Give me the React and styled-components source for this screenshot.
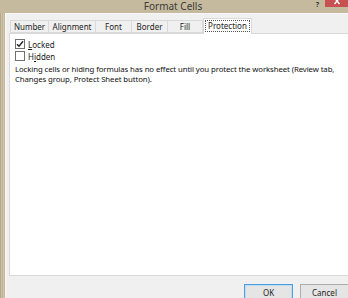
import React, { useState } from 'react';
import styled, { createGlobalStyle } from 'styled-components';

const GlobalStyle = createGlobalStyle`
  html, body {
    margin: 0;
    padding: 0;
    background: #c6ba9e;
  }
  body {
    font-family: "Noto Sans", "Open Sans", sans-serif;
  }
`;

const Window = styled.div`
  width: 348px;
  height: 298px;
  overflow: hidden;
  display: flex;
  flex-direction: column;
  background: #c6ba9e;
`;

const TitleBar = styled.div`
  height: 13px;
  flex: none;
  position: relative;
  display: flex;
  align-items: center;
  justify-content: center;
`;

const Title = styled.span`
  font-family: "Noto Sans", sans-serif;
  font-size: 10px;
  color: #3a3a3a;
  line-height: 13px;
  padding-right: 2px;
`;

const HelpMark = styled.span`
  position: absolute;
  right: 29px;
  top: 1px;
  font-size: 7px;
  line-height: 7px;
  font-weight: bold;
  color: #333;
`;

const CloseButton = styled.div`
  position: absolute;
  right: 0;
  top: 0;
  width: 23px;
  height: 7px;
  background: #c75050;
  display: flex;
  justify-content: center;
  align-items: flex-start;
`;

const Frame = styled.div`
  flex: 1;
  display: flex;
  min-height: 0;
`;

const LeftEdge = styled.div`
  width: 5px;
  flex: none;
  background: linear-gradient(to right, #b5a98c 0 1px, #cfc4a8 1px 2px, #bcb093 2px 3px, #d3c9ae 3px 4px, #c2b699 4px 5px);
`;

const Dialog = styled.div`
  flex: 1;
  background: #f0f0f0;
  border-top: 1px solid #f8f8f8;
  border-left: 1px solid #fafafa;
  display: flex;
  flex-direction: column;
  padding: 4px 0 0 3px;
  min-width: 0;
`;

const TabStrip = styled.div`
  display: flex;
  align-items: flex-end;
  height: 15px;
  padding-left: 1px;
  position: relative;
  z-index: 1;
`;

const Tab = styled.div`
  width: ${p => p.w}px;
  box-sizing: border-box;
  height: ${p => (p.active ? 16 : 13)}px;
  margin-bottom: ${p => (p.active ? -1 : 0)}px;
  border: 1px solid #d9d9d9;
  border-bottom: ${p => (p.active ? 'none' : '1px solid #d9d9d9')};
  border-left-width: ${p => (p.first || p.active ? 1 : 0)}px;
  background: ${p => (p.active ? '#ffffff' : '#f0f0f0')};
  display: flex;
  align-items: ${p => (p.active ? 'flex-start' : 'center')};
  justify-content: center;
  padding-top: ${p => (p.active ? 2 : 0)}px;
  font-size: 8px;
  color: #222;
  cursor: default;
`;

const TabLabel = styled.span`
  line-height: 10px;
  padding: 0 2px;
  outline: ${p => (p.focused ? '1px dotted #555' : 'none')};
`;

const Panel = styled.div`
  flex: 1;
  background: #fff;
  border: 1px solid #d9d9d9;
  border-right: none;
  display: flex;
  flex-direction: column;
  padding: 4px 0 0 5px;
  margin-right: -2px;
`;

const CheckRow = styled.label`
  display: flex;
  align-items: center;
  gap: 3px;
  height: 12px;
  font-size: 8px;
  color: #1a1a1a;
`;

const Box = styled.span`
  width: 8px;
  height: 8px;
  border: 1px solid #707070;
  background: #fff;
  display: flex;
  align-items: center;
  justify-content: center;
  flex: none;
`;

const Underline = styled.span`
  text-decoration: underline;
`;

const Note = styled.p`
  margin: 2px 0 0;
  font-size: 7.8px;
  letter-spacing: -0.1px;
  line-height: 10px;
  color: #111;
  width: 334px;
`;

const Footer = styled.div`
  height: 22px;
  flex: none;
  display: flex;
  justify-content: flex-end;
  align-items: flex-end;
  gap: 7px;
  margin-right: -1px;
`;

const Button = styled.div`
  width: 49px;
  height: 16px;
  box-sizing: border-box;
  border: 1px solid ${p => (p.primary ? '#4a9fdc' : '#adadad')};
  background: #e5e5e5;
  box-shadow: inset 0 0 0 1px ${p => (p.primary ? '#bcdcf4' : 'transparent')};
  display: flex;
  align-items: center;
  justify-content: center;
  font-size: 8px;
  color: #222;
  margin-bottom: -2px;
`;

const Check = () => (
  <svg width="8" height="8" viewBox="0 0 8 8">
    <path d="M1 4.2 L3 6.3 L7 1.3" fill="none" stroke="#222" strokeWidth="1.4" />
  </svg>
);

const CloseGlyph = () => (
  <svg width="8" height="6" viewBox="0 0 8 6">
    <path d="M1.5 -2 L6.5 4 M6.5 -2 L1.5 4" stroke="#fff" strokeWidth="1.4" />
  </svg>
);

const tabs = [
  { name: 'Number', w: 39 },
  { name: 'Alignment', w: 47 },
  { name: 'Font', w: 36 },
  { name: 'Border', w: 36 },
  { name: 'Fill', w: 35 },
  { name: 'Protection', w: 49 },
];

const App = () => {
  const [locked, setLocked] = useState(true);
  const [hidden, setHidden] = useState(false);

  return (
    <>
      <GlobalStyle />
      <Window>
        <TitleBar>
          <Title>Format Cells</Title>
          <HelpMark>?</HelpMark>
          <CloseButton>
            <CloseGlyph />
          </CloseButton>
        </TitleBar>
        <Frame>
          <LeftEdge />
          <Dialog>
            <TabStrip>
              {tabs.map((t, i) => (
                <Tab key={t.name} w={t.w} first={i === 0} active={t.name === 'Protection'}>
                  <TabLabel focused={t.name === 'Protection'}>{t.name}</TabLabel>
                </Tab>
              ))}
            </TabStrip>
            <Panel>
              <CheckRow onClick={() => setLocked(!locked)}>
                <Box>{locked && <Check />}</Box>
                <span><Underline>L</Underline>ocked</span>
              </CheckRow>
              <CheckRow onClick={() => setHidden(!hidden)}>
                <Box>{hidden && <Check />}</Box>
                <span>H<Underline>i</Underline>dden</span>
              </CheckRow>
              <Note>
                Locking cells or hiding formulas has no effect until you protect the worksheet (Review tab,
                Changes group, Protect Sheet button).
              </Note>
            </Panel>
            <Footer>
              <Button primary>OK</Button>
              <Button>Cancel</Button>
            </Footer>
          </Dialog>
        </Frame>
      </Window>
    </>
  );
};

export default App;
